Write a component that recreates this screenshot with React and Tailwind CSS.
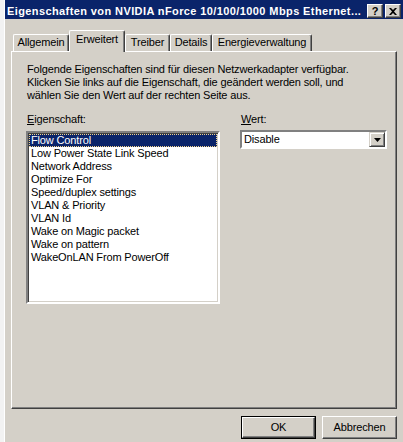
import { useState } from 'react';

const properties = [
  'Flow Control',
  'Low Power State Link Speed',
  'Network Address',
  'Optimize For',
  'Speed/duplex settings',
  'VLAN & Priority',
  'VLAN Id',
  'Wake on Magic packet',
  'Wake on pattern',
  'WakeOnLAN From PowerOff',
];

const tabs = [
  { label: 'Allgemein', width: 'w-[56px]' },
  { label: 'Erweitert', width: 'w-[56px]' },
  { label: 'Treiber', width: 'w-[45px]' },
  { label: 'Details', width: 'w-[42px]' },
  { label: 'Energieverwaltung', width: 'w-[100px]' },
];

export default function App() {
  const [activeTab, setActiveTab] = useState('Erweitert');
  const [selected, setSelected] = useState('Flow Control');

  return (
    <div className="flex h-[442px] w-[403px] overflow-hidden bg-[#d4d0c8] font-['Liberation_Sans',Arial,sans-serif] text-[11px] leading-[13px] tracking-[-0.15px] text-black">
      {/* Fenster dahinter */}
      <div className="w-[4px] shrink-0 bg-[#f2f2f2]" />

      <div className="flex flex-1 flex-col border-l border-white">
        {/* Titelleiste */}
        <div className="flex h-[19px] items-center bg-[#0a246a] pt-[3px] pl-[2px] pr-[2px]">
          <span className="flex-1 truncate text-[11px] font-bold tracking-[0.4px] text-white">
            Eigenschaften von NVIDIA nForce 10/100/1000 Mbps Ethernet...
          </span>
          <CaptionButton>?</CaptionButton>
          <div className="w-[2px]" />
          <CaptionButton>
            <svg width="8" height="7" viewBox="0 0 8 7">
              <path d="M0 0h2l2 2 2-2h2L5 3.5 8 7H6L4 5 2 7H0l3-3.5z" fill="black" />
            </svg>
          </CaptionButton>
        </div>

        <div className="flex flex-col pl-[6px]">
          {/* Reiter */}
          <div className="mt-[11px] flex h-[21px] items-end pl-[2px]">
            {tabs.map((tab) => {
              const active = tab.label === activeTab;
              return (
                <button
                  key={tab.label}
                  onClick={() => setActiveTab(tab.label)}
                  className={`relative z-10 flex ${tab.width} items-start justify-center rounded-t-[2px] border-l border-t border-r border-l-white border-t-white border-r-[#404040] shadow-[inset_-1px_0_0_#808080] ${
                    active ? '-mb-px h-[22px] bg-[#d4d0c8] pt-[2px]' : 'h-[17px] pt-[1px]'
                  }`}
                >
                  {tab.label}
                </button>
              );
            })}
          </div>

          {/* Registerkarte */}
          <div className="flex h-[358px] w-[386px] flex-col border border-t-white border-l-white border-r-[#404040] border-b-[#404040] pl-[14px] pt-[11px] shadow-[inset_-1px_-1px_0_#808080]">
            <p className="pl-px">
              Folgende Eigenschaften sind für diesen Netzwerkadapter verfügbar.
              <br />
              Klicken Sie links auf die Eigenschaft, die geändert werden soll, und
              <br />
              wählen Sie den Wert auf der rechten Seite aus.
            </p>

            <div className="mt-[11px] flex gap-[20px]">
              <div className="flex w-[194px] flex-col">
                <label className="pl-px">
                  <span className="underline">E</span>igenschaft:
                </label>
                <div className="mt-[5px] h-[173px] border-2 border-t-[#808080] border-l-[#808080] border-r-white border-b-white bg-white">
                  <div className="h-full pt-[1px] pl-[1px] pr-[1px] shadow-[inset_1px_1px_0_#404040,inset_-1px_-1px_0_#d4d0c8]">
                    {properties.map((p) => (
                      <div
                        key={p}
                        onClick={() => setSelected(p)}
                        className={`h-[13px] pl-[2px] whitespace-nowrap ${
                          p === selected
                            ? 'bg-[#0a246a] text-white outline-1 -outline-offset-1 outline-dotted outline-[#f3d48a]'
                            : ''
                        }`}
                      >
                        {p}
                      </div>
                    ))}
                  </div>
                </div>
              </div>

              <div className="flex w-[147px] flex-col">
                <label className="pl-px">
                  <span className="underline">W</span>ert:
                </label>
                <div className="mt-[4px] flex h-[19px] items-center border-2 border-t-[#808080] border-l-[#808080] border-r-white border-b-white bg-white">
                  <span className="flex-1 pl-[2px]">Disable</span>
                  <div className="flex h-[15px] w-[16px] items-center justify-center border border-t-[#d4d0c8] border-l-[#d4d0c8] border-r-[#404040] border-b-[#404040] bg-[#d4d0c8] shadow-[inset_1px_1px_0_white,inset_-1px_-1px_0_#808080]">
                    <svg width="7" height="4" viewBox="0 0 7 4">
                      <path d="M0 0h7L3.5 4z" fill="black" />
                    </svg>
                  </div>
                </div>
              </div>
            </div>
          </div>

          {/* Schaltflächen */}
          <div className="mt-[7px] flex w-[386px] justify-end gap-[6px]">
            <button className="h-[23px] w-[75px] border border-black">
              <div className="flex h-full w-full items-center justify-center border border-t-white border-l-white border-r-[#404040] border-b-[#404040] shadow-[inset_-1px_-1px_0_#808080]">
                OK
              </div>
            </button>
            <button className="flex h-[23px] w-[75px] items-center justify-center border border-t-white border-l-white border-r-[#404040] border-b-[#404040] shadow-[inset_-1px_-1px_0_#808080]">
              Abbrechen
            </button>
          </div>
        </div>
      </div>
    </div>
  );
}

function CaptionButton({ children }) {
  return (
    <button className="flex h-[14px] w-[16px] items-center justify-center border border-t-white border-l-white border-r-[#404040] border-b-[#404040] bg-[#d4d0c8] text-[11px] font-bold leading-none tracking-normal text-black shadow-[inset_-1px_-1px_0_#808080]">
      {children}
    </button>
  );
}
